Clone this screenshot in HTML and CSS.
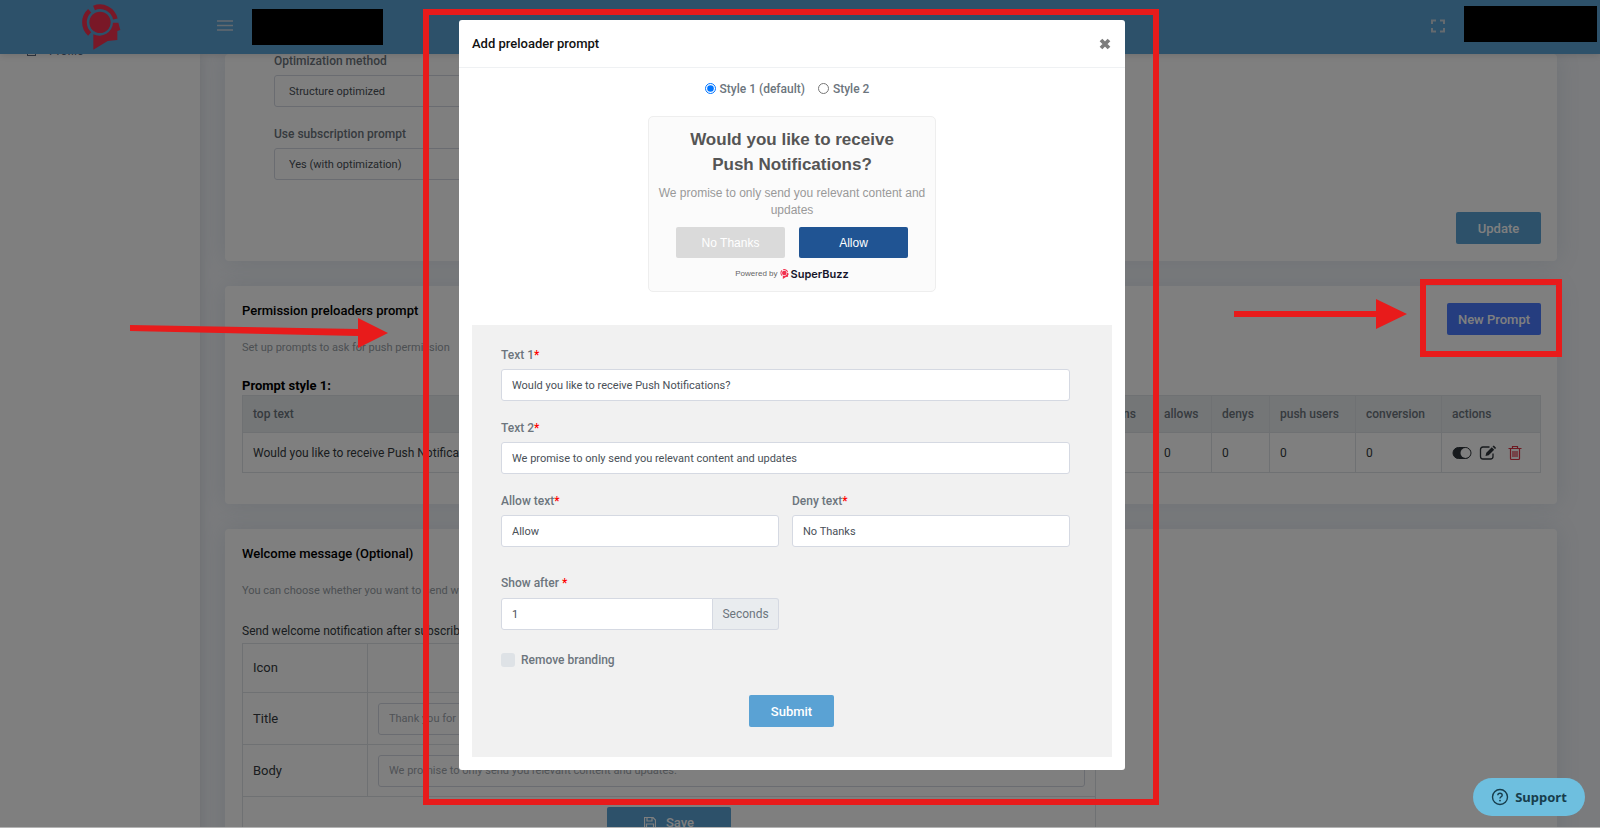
FILE: index.html
```html
<!DOCTYPE html>
<html lang="en">
<head>
    <meta charset="UTF-8">
    <meta name="viewport" content="width=device-width, initial-scale=1.0">
    <title>SuperBuzz - Permission prompts</title>
    <link rel="stylesheet" href="styles.css">
</head>
<body>

    <!-- Shared logo -->
    <svg class="defs" aria-hidden="true">
        <symbol id="logo" viewBox="240 8 124 138">
            <circle cx="299" cy="63" r="32" fill="currentColor"/>
            <path d="M268 28A47 47 0 0 0 268 98" fill="none" stroke="currentColor" stroke-width="14"/>
            <path d="M281 20A47 47 0 0 1 345 53" fill="none" stroke="currentColor" stroke-width="14"/>
            <path d="M338 64H354L360 86L351 89V116L322 119L279 145V99A41 41 0 0 0 338 64Z" fill="currentColor"/>
        </symbol>
    </svg>

    <header class="navbar">
        <a class="brand" href="#" aria-label="SuperBuzz">
            <svg class="brand-logo"><use href="#logo"/></svg>
        </a>
        <button class="icon-btn" type="button" aria-label="Toggle menu">
            <svg width="16" height="12" viewBox="0 0 16 12"><path d="M0 1h16M0 5.500h16M0 10h16" stroke="currentColor" stroke-width="1.500"/></svg>
        </button>
        <div class="site-box"></div>
        <button class="icon-btn expand" type="button" aria-label="Fullscreen">
            <svg width="14" height="14" viewBox="0 0 14 14"><path d="M1 5V1.500H5M9 1.500H13V5M13 9V12.500H9M5 12.500H1V9" fill="none" stroke="currentColor" stroke-width="2"/></svg>
        </button>
        <div class="user-box"></div>
    </header>

    <div class="layout">
        <nav class="sidebar">
            <a href="#"><span class="nav-icon"></span>Profile</a>
        </nav>

        <main class="content">
            <section class="card optimization">
                <div class="fields">
                    <label for="method">Optimization method</label>
                    <select id="method" class="control"><option>Structure optimized</option></select>
                    <label for="subscription">Use subscription prompt</label>
                    <select id="subscription" class="control"><option>Yes (with optimization)</option></select>
                </div>
                <div class="card-actions">
                    <button class="btn btn-blue" type="button">Update</button>
                </div>
            </section>

            <section class="card prompts">
                <div class="card-head">
                    <h2>Permission preloaders prompt</h2>
                    <button class="btn btn-primary" type="button">New Prompt</button>
                </div>
                <p class="muted">Set up prompts to ask for push permission</p>
                <h3>Prompt style 1:</h3>
                <table class="prompt-table">
                    <thead>
                        <tr>
                            <th>top text</th>
                            <th>bottom text</th>
                            <th class="w-impressions">impressions</th>
                            <th class="w-small">allows</th>
                            <th class="w-small">denys</th>
                            <th class="w-medium">push users</th>
                            <th class="w-medium">conversion</th>
                            <th class="w-actions">actions</th>
                        </tr>
                    </thead>
                    <tbody>
                        <tr>
                            <td>Would you like to receive Push Notifications?</td>
                            <td></td>
                            <td>0</td>
                            <td>0</td>
                            <td>0</td>
                            <td>0</td>
                            <td>0</td>
                            <td>
                                <div class="row-actions">
                                    <button type="button" aria-label="Toggle">
                                        <svg width="20" height="14" viewBox="0 0 20 14"><rect x="1" y="1.500" width="18" height="11" rx="5.500" fill="#2f353a" stroke="#2f353a"/><circle cx="13.500" cy="7" r="5" fill="#fff"/></svg>
                                    </button>
                                    <button type="button" aria-label="Edit">
                                        <svg width="18" height="16" viewBox="0 0 18 16"><path d="M10.500 2H4Q1.500 2 1.500 4.500V11.500Q1.500 14 4 14H11.500Q14 14 14 11.500V8.500" fill="none" stroke="#2f353a" stroke-width="1.300"/><path d="M6.500 11L7.300 7.800L12.800 2.300L15.200 4.700L9.700 10.200ZM13.500 1.600L14.800 .500L17.200 2.900L16 4.100Z" fill="#2f353a"/></svg>
                                    </button>
                                    <button type="button" aria-label="Delete">
                                        <svg width="14" height="16" viewBox="0 0 14 16"><path d="M.500 3.500H13.500M4.500 3.500V1.500H9.500V3.500M2.500 3.500V13.500Q2.500 14.500 3.500 14.500H10.500Q11.500 14.500 11.500 13.500V3.500M5 6V12M7 6V12M9 6V12" fill="none" stroke="#dc3545" stroke-width="1.200"/></svg>
                                    </button>
                                </div>
                            </td>
                        </tr>
                    </tbody>
                </table>
            </section>

            <section class="card welcome">
                <h2>Welcome message (Optional)</h2>
                <p class="muted">You can choose whether you want to send welcome</p>
                <p class="lead">Send welcome notification after subscribe</p>
                <table class="welcome-table">
                    <tbody>
                        <tr class="icon-row">
                            <th>Icon</th>
                            <td></td>
                        </tr>
                        <tr>
                            <th><label for="welcome-title">Title</label></th>
                            <td><input id="welcome-title" class="control" type="text" placeholder="Thank you for subscribing"></td>
                        </tr>
                        <tr>
                            <th><label for="welcome-body">Body</label></th>
                            <td><input id="welcome-body" class="control" type="text" placeholder="We promise to only send you relevant content and updates."></td>
                        </tr>
                        <tr>
                            <td colspan="2" class="save-cell">
                                <button class="btn btn-blue btn-save" type="button">
                                    <svg width="12" height="12" viewBox="0 0 12 12"><path d="M.500 .500H9L11.500 3V11.500H.500ZM3 .500V4H8V.500M2.500 11.500V7H9.500V11.500" fill="none" stroke="currentColor" stroke-width="1.200"/></svg>
                                    Save
                                </button>
                            </td>
                        </tr>
                    </tbody>
                </table>
            </section>
        </main>
    </div>

    <div class="overlay">
        <div class="modal" role="dialog" aria-labelledby="modal-title">
            <div class="modal-header">
                <h1 id="modal-title">Add preloader prompt</h1>
                <button class="close" type="button" aria-label="Close">
                    <svg width="12" height="12" viewBox="0 0 12 12"><path d="M2 2L10 10M10 2L2 10" stroke="currentColor" stroke-width="3.800"/></svg>
                </button>
            </div>

            <form class="modal-body">
                <div class="style-choice">
                    <label><input type="radio" name="style" checked>Style 1 (default)</label>
                    <label><input type="radio" name="style">Style 2</label>
                </div>

                <div class="preview">
                    <h2>Would you like to receive Push Notifications?</h2>
                    <p>We promise to only send you relevant content and updates</p>
                    <div class="preview-buttons">
                        <button class="deny" type="button">No Thanks</button>
                        <button class="allow" type="button">Allow</button>
                    </div>
                    <div class="powered">
                        <span>Powered by</span>
                        <svg width="9" height="10"><use href="#logo"/></svg>
                        <strong>SuperBuzz</strong>
                    </div>
                </div>

                <div class="form-panel">
                    <div class="field wide">
                        <label for="text1">Text 1<span class="req">*</span></label>
                        <input id="text1" class="control" type="text" value="Would you like to receive Push Notifications?">
                    </div>
                    <div class="field wide">
                        <label for="text2">Text 2<span class="req">*</span></label>
                        <input id="text2" class="control" type="text" value="We promise to only send you relevant content and updates">
                    </div>
                    <div class="field">
                        <label for="allow-text">Allow text<span class="req">*</span></label>
                        <input id="allow-text" class="control" type="text" value="Allow">
                    </div>
                    <div class="field">
                        <label for="deny-text">Deny text<span class="req">*</span></label>
                        <input id="deny-text" class="control" type="text" value="No Thanks">
                    </div>
                    <div class="field delay">
                        <label for="show-after">Show after <span class="req">*</span></label>
                        <div class="input-group">
                            <input id="show-after" class="control" type="text" value="1">
                            <span class="addon">Seconds</span>
                        </div>
                    </div>
                    <label class="check wide"><input type="checkbox">Remove branding</label>
                    <div class="submit-row wide">
                        <button class="btn btn-blue" type="submit">Submit</button>
                    </div>
                </div>
            </form>

            <div class="mark mark-modal"></div>
        </div>
    </div>

    <!-- Tutorial marks -->
    <div class="mark mark-button"></div>
    <svg class="arrow arrow-left" width="260" height="32" viewBox="0 0 260 32"><path d="M0 8L228 12V1L258 16L228 31V19L0 14Z" fill="#e81b1b"/></svg>
    <svg class="arrow arrow-right" width="174" height="32" viewBox="0 0 174 32"><path d="M0 13H142V1L173 16L142 31V19H0Z" fill="#e81b1b"/></svg>

    <button class="support" type="button">
        <svg width="18" height="18" viewBox="0 0 18 18"><circle cx="9" cy="9" r="7.500" fill="none" stroke="currentColor" stroke-width="1.400"/><path d="M6.800 7.300Q6.900 5.300 9 5.300Q11.200 5.300 11.200 7.200Q11.200 8.300 10 8.900Q9 9.400 9 10.400" fill="none" stroke="currentColor" stroke-width="1.400"/><circle cx="9" cy="12.600" r=".900" fill="currentColor"/></svg>
        Support
    </button>

</body>
</html>
```
FILE: styles.css
```css
/* General */
* {
    box-sizing: border-box;
}
body {
    margin: 0;
    height: 100vh;
    overflow: hidden;
    background-color: #f4f6fa;
    color: #343a40;
    font-family: Roboto, "Liberation Sans", sans-serif;
    font-size: 12px;
    line-height: 18px;
}
h1, h2, h3, p {
    margin: 0;
}
button, input, select {
    font-family: inherit;
}
button {
    padding: 0;
    border: 0;
    background: none;
    cursor: pointer;
}
svg {
    display: block;
}
.defs {
    position: absolute;
    width: 0;
    height: 0;
}

/* Top bar */
.navbar {
    position: fixed;
    top: 0;
    left: 0;
    right: 0;
    z-index: 10;
    display: flex;
    align-items: center;
    height: 54px;
    padding-right: 3px;
    background-color: #5aa2d4;
    box-shadow: 0 1px 8px rgba(0, 0, 0, 0.15);
}
.brand {
    display: flex;
    justify-content: center;
    width: 201px;
    color: #f2304e;
}
.brand-logo {
    width: 42px;
    height: 46px;
}
.icon-btn {
    margin: 0 19px 3px 16px;
    color: #c8d4de;
}
.site-box, .user-box {
    width: 131px;
    height: 36px;
    background-color: #000;
}
.expand {
    margin-left: auto;
}
.user-box {
    width: 133px;
    margin-bottom: 6px;
}

/* Page layout */
.layout {
    display: flex;
    padding-top: 54px;
}
.sidebar {
    width: 200px;
    min-height: 100vh;
    background-color: #fff;
    box-shadow: 0 0 12px rgba(80, 100, 120, 0.2);
}
.sidebar a {
    display: flex;
    align-items: center;
    gap: 13px;
    margin-top: -12px;
    padding-left: 27px;
    color: #5c6b80;
    text-decoration: none;
}
.nav-icon {
    width: 9px;
    height: 9px;
    border: 1px solid #5c6b80;
}
.content {
    flex: 1;
    padding: 0 43px 0 25px;
}
.card {
    margin-bottom: 25px;
    padding: 17px 16px 17px 17px;
    border-radius: 4px;
    background-color: #fff;
    box-shadow: 0 0 24px rgba(80, 110, 140, 0.14);
}
.card h2 {
    color: #000;
    font-size: 13px;
    font-weight: 500;
    line-height: 16px;
}
.card h3 {
    margin-top: 20px;
    color: #000;
    font-size: 13px;
    font-weight: 700;
    line-height: 18px;
}
.muted {
    color: #98a0a6;
    font-size: 11px;
}

/* Controls */
.control {
    width: 100%;
    height: 32px;
    padding: 0 10px;
    border: 1px solid #d5d9e2;
    border-radius: 3px;
    background-color: #fff;
    color: #495057;
    font-size: 11px;
}
.control::placeholder {
    color: #a0a6ad;
}
.btn {
    height: 32px;
    padding: 0 20px;
    border-radius: 2px;
    color: #fff;
    font-size: 13px;
    font-weight: 500;
}
.btn-blue {
    min-width: 85px;
    background-color: #5aa2d4;
}
.btn-primary {
    min-width: 94px;
    padding: 0 10px;
    background-color: #4a7bff;
}

/* Optimization card */
.optimization {
    padding-top: 0;
}
.fields {
    width: 50%;
    padding-left: 32px;
}
.fields label {
    display: block;
    margin-bottom: 7px;
    color: #6c757d;
    font-weight: 500;
    line-height: 14px;
}
.fields .control {
    display: block;
    margin-bottom: 20px;
    appearance: none;
    padding-left: 14px;
}
.card-actions {
    display: flex;
    justify-content: flex-end;
    padding-top: 12px;
}

/* Prompts card */
.prompts {
    padding-bottom: 31px;
}
.card-head {
    display: flex;
    justify-content: space-between;
    align-items: flex-start;
    margin-bottom: 4px;
}
table {
    width: 100%;
    border-collapse: collapse;
}
th, td {
    padding: 0 10px;
    border: 1px solid #dee2e6;
    text-align: left;
}
.prompt-table {
    table-layout: fixed;
}
.prompt-table th {
    height: 37px;
    background-color: #e9ecef;
    color: #6c757d;
    font-weight: 500;
}
.prompt-table td {
    height: 40px;
    white-space: nowrap;
}
.w-impressions {
    width: 94px;
}
.w-small {
    width: 58px;
}
.w-medium {
    width: 86px;
}
.w-actions {
    width: 99px;
}
.row-actions {
    display: flex;
    align-items: center;
    gap: 7px;
}
.row-actions button:last-child {
    margin-left: 4px;
}

/* Welcome card */
.welcome .muted {
    margin-top: 20px;
}
.lead {
    margin: 22px 0 3px;
}
.welcome-table {
    max-width: 854px;
    font-size: 13px;
}
.welcome-table th {
    width: 125px;
    font-weight: 400;
}
.welcome-table tr {
    height: 52px;
}
.welcome-table .icon-row {
    height: 49px;
}
.save-cell {
    text-align: center;
}
.btn-save {
    display: inline-flex;
    align-items: center;
    justify-content: center;
    gap: 10px;
    width: 124px;
}

/* Modal */
.overlay {
    position: fixed;
    inset: 0;
    z-index: 20;
    padding: 20px 16px 0 0;
    border-bottom: 1px solid #b4b4b4;
    background-color: rgba(0, 0, 0, 0.5);
}
.modal {
    position: relative;
    width: 666px;
    margin: 0 auto;
    border-radius: 3px;
    background-color: #fff;
}
.modal-header {
    display: flex;
    align-items: center;
    justify-content: space-between;
    height: 48px;
    padding: 0 13px;
    border-bottom: 1px solid #eff1f3;
}
.modal-header h1 {
    color: #111;
    font-size: 13px;
    font-weight: 500;
}
.close {
    padding: 1px;
    color: #7d7d7d;
}
.modal-body {
    padding: 13px;
}
.style-choice {
    display: flex;
    justify-content: center;
    gap: 13px;
    height: 35px;
    padding-right: 10px;
    color: #6c757d;
    font-weight: 500;
    line-height: 16px;
}
.style-choice label {
    display: flex;
    gap: 4px;
}
.style-choice input {
    width: 11px;
    height: 11px;
    margin: 2px 0 0;
}
.preview {
    width: 288px;
    height: 176px;
    margin: 0 auto 33px;
    padding: 10px 13px;
    border: 1px solid #eee;
    border-radius: 5px;
    background-color: #fbfbfb;
    font-family: "Liberation Sans", Arial, sans-serif;
    text-align: center;
}
.preview h2 {
    padding: 0 20px;
    color: #555;
    font-size: 17px;
    line-height: 25px;
}
.preview p {
    margin: 8px -4px;
    color: #999;
    font-size: 12px;
    line-height: 17px;
}
.preview-buttons {
    display: flex;
    justify-content: center;
    gap: 14px;
}
.preview-buttons button {
    width: 109px;
    height: 31px;
    border-radius: 2px;
    color: #fff;
    font-size: 12px;
}
.preview-buttons .deny {
    background-color: #dadada;
}
.preview-buttons .allow {
    background-color: #205493;
}
.powered {
    display: flex;
    align-items: center;
    justify-content: center;
    gap: 2px;
    margin-top: 7px;
    color: #666;
    font-size: 8px;
}
.powered svg {
    color: #f2304e;
}
.powered strong {
    color: #15152a;
    font-family: Inter, sans-serif;
    font-size: 11px;
    font-weight: 600;
}

/* Prompt form */
.form-panel {
    display: grid;
    grid-template-columns: 1fr 1fr;
    gap: 20px 13px;
    padding: 23px 42px 30px 29px;
    background-color: #f1f1f1;
}
.wide {
    grid-column: 1 / 3;
}
.field label {
    display: block;
    margin-bottom: 7px;
    color: #6c757d;
    font-weight: 500;
    line-height: 14px;
}
.field .control {
    display: block;
}
.req {
    color: #f00;
}
.delay {
    grid-column: 1;
    padding-top: 9px;
}
.delay label {
    margin-bottom: 8px;
}
.input-group {
    display: flex;
}
.input-group .control {
    flex: 1;
    border-radius: 3px 0 0 3px;
}
.addon {
    width: 66px;
    border: 1px solid #d5d9e2;
    border-left: 0;
    border-radius: 0 3px 3px 0;
    background-color: #e9ecef;
    color: #6c757d;
    font-size: 12px;
    line-height: 30px;
    text-align: center;
}
.check {
    display: flex;
    align-items: center;
    gap: 6px;
    padding-top: 1px;
    color: #6c757d;
    font-weight: 500;
}
.check input {
    appearance: none;
    width: 14px;
    height: 14px;
    margin: 0;
    border-radius: 3px;
    background-color: #dee2e6;
}
.submit-row {
    padding: 6px 0 0 12px;
    text-align: center;
}

/* Tutorial marks */
.mark {
    position: absolute;
    border: 6px solid #e81b1b;
    pointer-events: none;
}
.mark-modal {
    inset: -11px -34px -35px -36px;
}
.mark-button {
    top: 279px;
    right: 38px;
    z-index: 30;
    width: 142px;
    height: 78px;
}
.arrow {
    position: absolute;
    z-index: 30;
}
.arrow-left {
    top: 317px;
    left: 130px;
}
.arrow-right {
    top: 298px;
    right: 192px;
}

/* Support bubble */
.support {
    position: fixed;
    right: 15px;
    bottom: 12px;
    z-index: 30;
    display: flex;
    align-items: center;
    justify-content: center;
    gap: 6px;
    width: 112px;
    height: 38px;
    border-radius: 19px;
    background-color: #6ebfdf;
    color: #173d4c;
    font-family: "Noto Sans", sans-serif;
    font-size: 13px;
    font-weight: 700;
}
```
